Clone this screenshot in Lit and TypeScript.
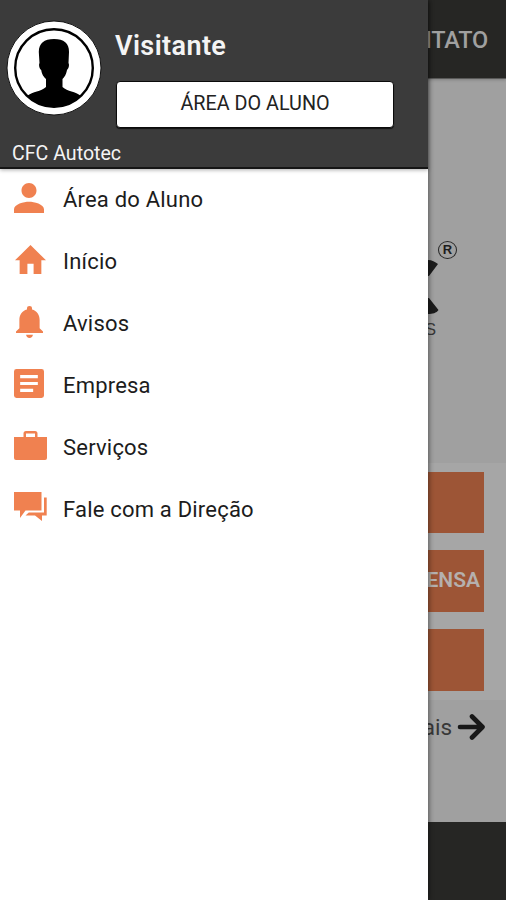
import { LitElement, html, css, svg } from "lit";
import { customElement } from "lit/decorators.js";

const menu = [
  { label: "Área do Aluno", cls: "person", box: "4 4 16 16", art: svg`<path d="M12 12c2.2 0 4-1.8 4-4s-1.8-4-4-4-4 1.8-4 4 1.8 4 4 4zm0 2c-2.7 0-8 1.3-8 4v2h16v-2c0-2.7-5.3-4-8-4z"/>` },
  { label: "Início", cls: "home", box: "2 3 20 17", art: svg`<path d="M10 20v-6h4v6h5v-8h3L12 3 2 12h3v8z"/>` },
  { label: "Avisos", cls: "bell", box: "4 2.5 16 19.5", art: svg`<path d="M12 22c1.1 0 2-.9 2-2h-4c0 1.1.9 2 2 2zm6-6v-5c0-3.07-1.64-5.64-4.5-6.32V4a1.5 1.5 0 0 0-3 0v.68C7.63 5.36 6 7.92 6 11v5l-2 2v1h16v-1z"/>` },
  { label: "Empresa", cls: "article", box: "3 3 18 18", art: svg`<path d="M19.5 3h-15A1.5 1.5 0 0 0 3 4.5v15A1.5 1.5 0 0 0 4.5 21h15a1.5 1.5 0 0 0 1.5-1.5v-15A1.5 1.5 0 0 0 19.5 3zM14.500 17.300H6.700v-2h7.800zM17.300 13H6.700v-2h10.600zm0-4.200H6.700v-2h10.600z"/>` },
  { label: "Serviços", cls: "work", box: "0 0 33 29", art: svg`<path d="M23.500 6V2.500A2.500 2.500 0 0 0 21 0h-9a2.500 2.500 0 0 0-2.500 2.500V6H0v21a2 2 0 0 0 2 2h29a2 2 0 0 0 2-2V6zM21 6h-9V2.500h9z"/>` },
  { label: "Fale com a Direção", cls: "forum", box: "0 0 33 29", art: svg`<path d="M0 0h27.500v18.500H11.500L6 26v-7.500H0zM30 5.500h2.700v18h-4.700V29l-7-5.500H11.500l3.300-3H30z"/>` },
];

@customElement("app-root")
export class AppRoot extends LitElement {
  static styles = css`
    :host { display: block; position: relative; width: 506px; height: 900px; overflow: hidden; font-family: Roboto, sans-serif; background: #a0a0a0; }
    * { box-sizing: border-box; }
    .page { height: 900px; display: flex; flex-direction: column; }
    .bar { height: 79px; flex: none; display: flex; justify-content: flex-end; align-items: center; padding: 2px 18px 0 0; background: #262624; color: #a0a0a0; font-weight: 500; font-size: 23.5px; letter-spacing: -.2px; border-bottom: 1px solid #5a5a59; box-shadow: 0 1px 3px #0003; }
    .hero { height: 384px; flex: none; display: flex; flex-direction: column; align-items: flex-end; padding-top: 162px; color: #1c1c1c; }
    .reg { width: 19px; height: 18px; margin-right: 49px; border: 1.5px solid #262626; border-radius: 50%; font: 700 13px/16px "Liberation Sans", sans-serif; text-align: center; }
    .letter { display: block; width: 60px; height: 56px; margin: 1px 67px 0 0; }
    .sub { font: 17px/20px "Liberation Sans", sans-serif; color: #393939; margin: 4px 70px 0 0; }
    .actions { height: 237px; flex: none; background: #a6a6a6; padding: 8.6px 22px 0; display: flex; flex-direction: column; gap: 17px; }
    .act { height: 61.7px; background: #9d5536; color: #b5b0ae; font-size: 21px; font-weight: 600; display: flex; align-items: center; justify-content: flex-end; padding: 0 4px 3px 0; }
    .more { flex: 1; display: flex; justify-content: flex-end; align-items: flex-start; padding: 14px 21px 0 0; color: #383838; font-size: 22.5px; line-height: 27px; gap: 5px; }
    .more svg { width: 28px; height: 26px; fill: none; stroke: #171717; stroke-width: 4.6; stroke-linecap: round; stroke-linejoin: round; }
    .foot { height: 78px; flex: none; background: #262624; }
    .drawer { position: absolute; inset: 0 auto 0 0; width: 428px; background: #fff; box-shadow: 1px 0 5px #0007; }
    .head { height: 169px; background: #3b3b3b; border-bottom: 2px solid #151515; box-shadow: 0 1px 4px #0005; display: flex; flex-direction: column; color: #f4f4f4; }
    .profile { display: flex; height: 141px; padding: 20px 0 0 6px; gap: 14px; }
    .avatar { width: 96px; height: 96px; }
    .side { width: 278px; padding-top: 11px; }
    .name { font-size: 27px; line-height: 30px; font-weight: 600; letter-spacing: .4px; margin-left: -1px; height: 50px; }
    .btn { width: 278px; height: 47px; background: #fff; border: 1px solid #0b0b0b; border-radius: 4px; color: #222; font-size: 19.8px; line-height: 44px; text-align: center; box-shadow: 0 1px 1px #111; }
    .school { font-size: 19.6px; line-height: 25px; padding-left: 12px; }
    .list { margin-top: -2px; }
    .row { display: flex; align-items: center; height: 62px; padding-left: 14px; color: #1c1c1c; font-size: 22px; letter-spacing: .2px; }
    .icon { width: 49px; flex: none; display: flex; padding-bottom: 1px; }
    .icon svg { display: block; fill: #f08150; }
    .person { width: 30px; height: 30px; }
    .home { width: 31px; height: 29px; margin-left: 1px; }
    .bell { width: 27px; height: 32px; margin-left: 2px; }
    .article { width: 30px; height: 29px; margin-bottom: 1px; }
    .work { width: 33px; height: 29px; margin-bottom: 1px; }
    .forum { width: 33px; height: 29px; margin-bottom: 3px; }
    .label { padding-top: 2px; }
  `;
  render() {
    return html`
      <div class="page">
        <div class="bar">CONTATO</div>
        <div class="hero">
          <div class="reg">R</div>
          <svg class="letter" viewBox="0 0 60 56" fill="#1c1c1c"><path d="M49 0c4 0 7 2 10 4l-9 12h-1zM49 38h1l9.500 12c-2 3-6 4-10.500 4z"/></svg>
          <div class="sub">S</div>
        </div>
        <div class="actions">
          <div class="act"></div><div class="act">ENSA</div><div class="act"></div>
        </div>
        <div class="more">mais<svg viewBox="0 0 28 26"><path d="M3 13h22M15 2.500 25.500 13 15 23.500"/></svg></div>
        <div class="foot"></div>
      </div>
      <div class="drawer">
        <div class="head">
          <div class="profile">
            <svg class="avatar" viewBox="0 0 96 96">
              <circle cx="48" cy="48" r="47" fill="#fff" stroke="#111"/>
              <circle cx="48" cy="48" r="38.8" fill="#fff" stroke="#000" stroke-width="2.400"/>
              <path d="M48 19c10 0 15 4 15 13l-.5 11c1.200 2 0 6-1.500 7-1 5-2.500 7-4.500 9v8c5 5 13 4 18.500 9a38 38 0 0 1-54 0C27 71 35 72 40 67v-8c-2-2-4-4-4.800-9-1.700-1-2.800-5-1.700-7l-.7-11C33 23 38 19 48 19z"/>
            </svg>
            <div class="side"><div class="name">Visitante</div><div class="btn">ÁREA DO ALUNO</div></div>
          </div>
          <div class="school">CFC Autotec</div>
        </div>
        <div class="list">
          ${menu.map((m) => html`<div class="row"><span class="icon"><svg class=${m.cls} viewBox=${m.box} preserveAspectRatio="none">${m.art}</svg></span><span class="label">${m.label}</span></div>`)}
        </div>
      </div>`;
  }
}
